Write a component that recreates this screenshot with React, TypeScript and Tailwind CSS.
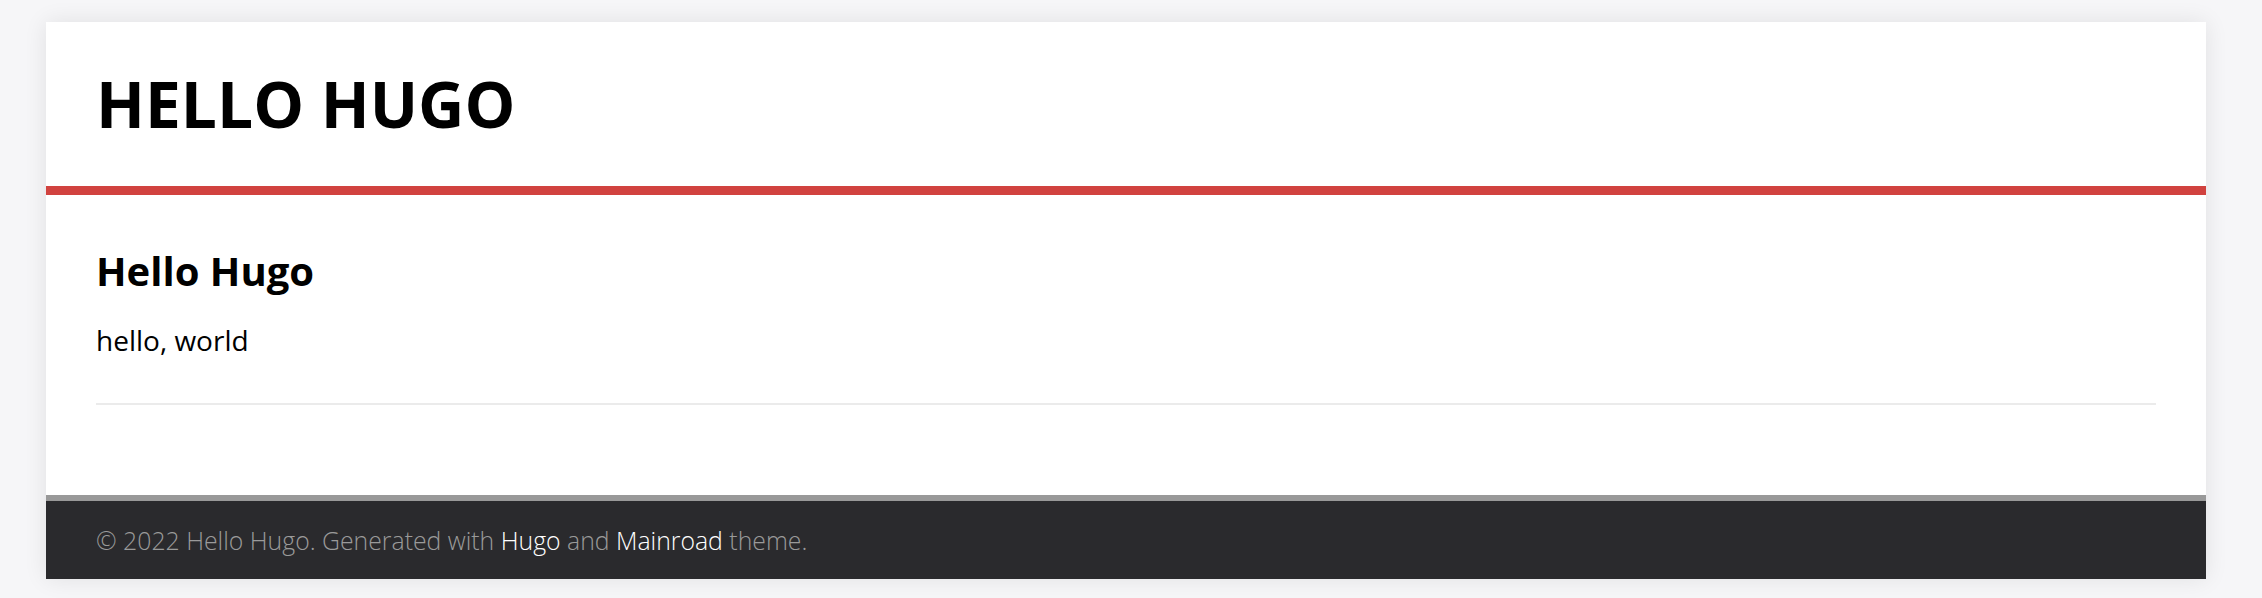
import React from "react";

export default function App() {
  return (
    <div className="min-h-[598px] w-full bg-[#f6f6f8] pt-[22px] pb-[19px]" style={{ fontFamily: '"Open Sans", "Liberation Sans", sans-serif' }}>
      <div className="ml-[46px] w-[2160px] bg-white shadow-[0_0_22px_rgba(0,0,0,0.09)]">
        <header className="px-[50px] pt-[38px] pb-[39px] border-b-[9px] border-[#d1423f]">
          <h1 className="text-[64px] leading-[87px] font-bold uppercase text-black">Hello Hugo</h1>
        </header>
        <main className="px-[50px] pt-[49px] pb-[90px]">
          <h2 className="text-[40px] leading-[54px] font-bold text-black">Hello Hugo</h2>
          <p className="mt-[23px] text-[28px] leading-[38px] text-black">hello, world</p>
          <div className="mt-[44px] h-[2px] bg-[#ebebeb]" />
        </main>
        <footer className="border-t-[6px] border-[#999999] bg-[#2a2a2d] px-[50px] py-[22px] text-[24.8px] font-light leading-[34px] text-[#9a9a9a]">
          © 2022 Hello Hugo. Generated with <span className="text-white">Hugo</span> and{" "}
          <span className="text-white">Mainroad</span> theme.
        </footer>
      </div>
    </div>
  );
}
